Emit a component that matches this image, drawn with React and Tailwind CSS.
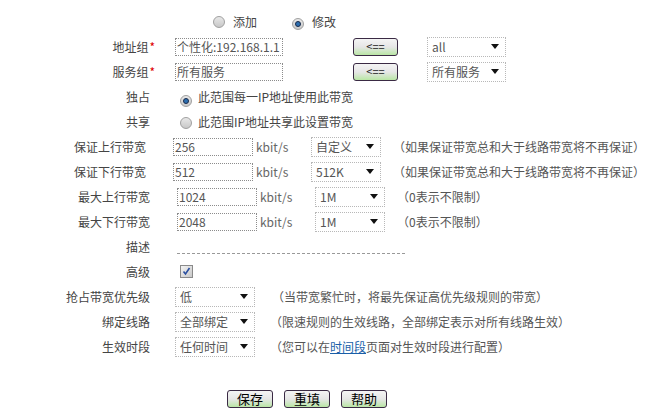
import React from 'react';

const font = { fontFamily: '"Noto Sans CJK SC", "Liberation Sans", sans-serif' };

function Radio({ checked }) {
  return (
    <span className="inline-flex h-[12px] w-[12px] items-center justify-center rounded-full border border-[#a0a0a0] bg-gradient-to-b from-[#e8e8e8] to-[#c8c8c8]">
      {checked && <span className="h-[6px] w-[6px] rounded-full border border-[#1a2a4a] bg-[#2c6fb0]" />}
    </span>
  );
}

function Select({ value, w }) {
  return (
    <div className={`flex h-[20px] ${w} items-center justify-between border border-dotted border-[#b8b8b8] pl-[4px] pr-[6px] text-[12px] text-[#555]`}>
      <span>{value}</span>
      <svg width="8" height="5" viewBox="0 0 8 5"><path d="M0 0h8L4 5z" fill="#111" /></svg>
    </div>
  );
}

function TextBox({ value, w }) {
  return (
    <div className={`flex h-[18px] ${w} items-center overflow-hidden whitespace-nowrap border border-dotted border-[#8c8c8c] pl-[1px] text-[12px] text-[#555]`}>
      {value}
    </div>
  );
}

function Btn({ children, w = 'w-[46px]', big }) {
  return (
    <button className={`flex h-[18px] ${w} items-center justify-center rounded-[3px] border border-[#3a2a44] bg-gradient-to-b from-[#f4f4f4] via-[#e6e6e6] to-[#b9e6a4] ${big ? 'text-[13px] text-black' : 'text-[11px] text-[#222]'}`}>
      {children}
    </button>
  );
}

function Row({ label, star, children }) {
  return (
    <div className="flex h-[25px] items-center">
      <div className="w-[150px] text-right text-[12px] text-[#444]">
        {label}
        {star && <span className="-mr-[5px] ml-[1px] text-[#d00]">*</span>}
      </div>
      <div className="ml-[25px] flex items-center">{children}</div>
    </div>
  );
}

const Note = ({ children, ml = 'ml-[12px]' }) => (
  <span className={`${ml} whitespace-nowrap text-[12px] text-[#555]`}>{children}</span>
);

const bw = [
  ['保证上行带宽', '256', '自定义', '（如果保证带宽总和大于线路带宽将不再保证）'],
  ['保证下行带宽', '512', '512K', '（如果保证带宽总和大于线路带宽将不再保证）'],
  ['最大上行带宽', '1024', '1M', '（0表示不限制）'],
  ['最大下行带宽', '2048', '1M', '（0表示不限制）'],
];

export default function App() {
  return (
    <div className="h-[420px] w-[645px] bg-white pt-[9px]" style={font}>
      <div className="flex h-[25px] items-center pl-[213px] text-[12px] text-[#444]">
        <Radio />
        <span className="ml-[8px]">添加</span>
        <span className="ml-[35px]"><Radio checked /></span>
        <span className="ml-[8px]">修改</span>
      </div>

      <Row label="地址组" star>
        <TextBox value="个性化:192.168.1.1" w="w-[108px]" />
        <span className="ml-[70px]"><Btn w="w-[45px]">&lt;==</Btn></span>
        <span className="ml-[29px]"><Select value="all" w="w-[79px]" /></span>
      </Row>
      <Row label="服务组" star>
        <TextBox value="所有服务" w="w-[108px]" />
        <span className="ml-[70px]"><Btn w="w-[45px]">&lt;==</Btn></span>
        <span className="ml-[29px]"><Select value="所有服务" w="w-[79px]" /></span>
      </Row>
      <Row label="独占">
        <span className="ml-[5px]"><Radio checked /></span>
        <span className="ml-[6px] text-[12px] text-[#444]">此范围每一IP地址使用此带宽</span>
      </Row>
      <Row label="共享">
        <span className="ml-[5px]"><Radio /></span>
        <span className="ml-[6px] text-[12px] text-[#444]">此范围IP地址共享此设置带宽</span>
      </Row>

      {bw.map(([label, v, sel, note]) => (
        <Row key={label} label={label}>
          <span className="ml-[2px]"><TextBox value={v} w="w-[80px]" /></span>
          <span className="ml-[3px] w-[55px] text-[12px] text-[#666]">kbit/s</span>
          <Select value={sel} w="w-[70px]" />
          <Note>{note}</Note>
        </Row>
      ))}

      <Row label="描述">
        <div className="ml-[2px] mt-[14px] h-[1px] w-[228px] border-b border-dashed border-[#999]" />
      </Row>
      <Row label="高级">
        <span className="ml-[5px] flex h-[13px] w-[13px] items-center justify-center border border-[#8a8a8a] bg-gradient-to-br from-[#f4f4f4] to-[#c8c8c8]">
          <svg width="9" height="9" viewBox="0 0 9 9"><path d="M1.5 4.5l2 2.5L7.5 1" stroke="#2a4fa0" strokeWidth="1.6" fill="none" /></svg>
        </span>
      </Row>
      <Row label="抢占带宽优先级">
        <Select value="低" w="w-[80px]" />
        <Note ml="ml-[17px]">（当带宽繁忙时，将最先保证高优先级规则的带宽）</Note>
      </Row>
      <Row label="绑定线路">
        <Select value="全部绑定" w="w-[80px]" />
        <Note ml="ml-[15px]">（限速规则的生效线路，全部绑定表示对所有线路生效）</Note>
      </Row>
      <Row label="生效时段">
        <Select value="任何时间" w="w-[80px]" />
        <Note ml="ml-[15px]">
          （您可以在<a className="text-[#1a5fa8] underline">时间段</a>页面对生效时段进行配置）
        </Note>
      </Row>

      <div className="mt-[31px] flex gap-[11px] pl-[227px]">
        <Btn big>保存</Btn>
        <Btn big>重填</Btn>
        <Btn big>帮助</Btn>
      </div>
    </div>
  );
}
